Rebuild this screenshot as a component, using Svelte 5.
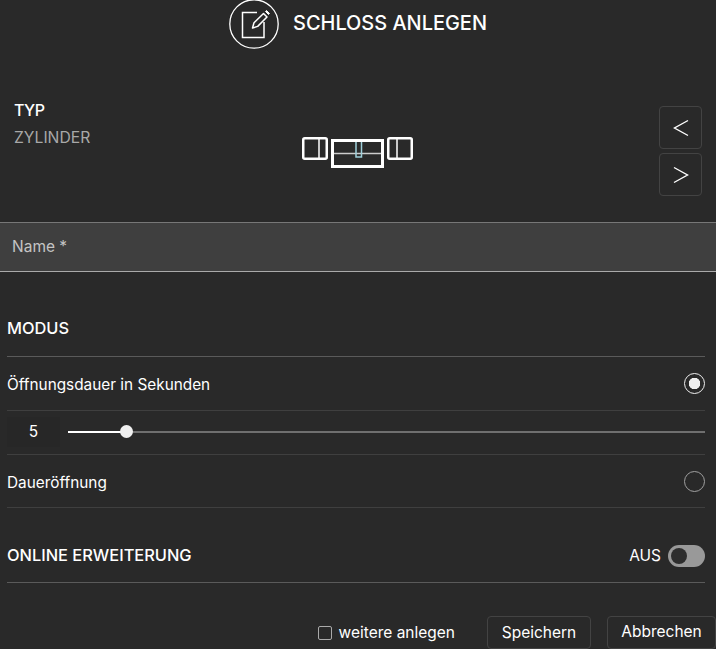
<script>
	let seconds = $state(5);
	let mode = $state('timed');
	let online = $state(false);
	let more = $state(false);
</script>

<div class="page">
	<header class="head">
		<span class="head-icon">
			<svg width="50" height="50" viewBox="0 0 50 50" fill="none" stroke="#fff">
				<circle cx="25" cy="25" r="24.2" stroke-width="1.3" />
				<path d="M35 23V38.5H13.5V13.5H28" stroke-width="1.5" />
				<path d="M23.5 29l1.5-5.2L34.5 14.5l3.5 3.5-9.3 9.4z" stroke-width="1.5" stroke-linejoin="round" />
				<path d="M36.5 12.5l1-1 3 3-1 1z" fill="#fff" stroke-width="1" />
			</svg>
		</span>
		<h1>SCHLOSS ANLEGEN</h1>
	</header>

	<section class="type">
		<div class="type-text">
			<div class="type-label">TYP</div>
			<div class="type-value">ZYLINDER</div>
		</div>
		<div class="type-pic">
			<svg width="114" height="34" viewBox="0 0 114 34" fill="none" stroke="#fff">
				<rect x="2.25" y="2.25" width="23.5" height="20.5" rx="1.5" stroke-width="2.5" />
				<path d="M18 3V22" stroke-width="1.5" />
				<rect x="31.5" y="4.5" width="50" height="26" stroke-width="3" />
				<path d="M33 17.5H80" stroke="#ccc" stroke-width="1.5" />
				<path d="M55 6V21H60.5V6" stroke="#9fd0da" stroke-width="1.5" />
				<rect x="87.25" y="2.25" width="23.5" height="20.5" rx="1.5" stroke-width="2.5" />
				<path d="M96 3V22" stroke-width="1.5" />
			</svg>
		</div>
		<div class="arrows">
			<button class="arrow" aria-label="Zurück">
				<svg width="16" height="18" viewBox="0 0 16 18" fill="none" stroke="#fff" stroke-width="1.4"><path d="M15 1.5L1.5 9L15 16.5" /></svg>
			</button>
			<button class="arrow" aria-label="Weiter">
				<svg width="16" height="18" viewBox="0 0 16 18" fill="none" stroke="#fff" stroke-width="1.4"><path d="M1 1.5L14.5 9L1 16.5" /></svg>
			</button>
		</div>
	</section>

	<div class="name-field">Name *</div>

	<section class="modus">
		<h2 class="modus-title">MODUS</h2>
		<button class="row" onclick={() => (mode = 'timed')}>
			<span class="row-text">Öffnungsdauer in Sekunden</span>
			<span class="radio" class:on={mode === 'timed'}></span>
		</button>
		<div class="slider-row">
			<span class="value">{seconds}</span>
			<div class="track">
				<div class="fill" style="width: {seconds * 11.6}px"></div>
				<div class="thumb" style="left: {seconds * 11.6 - 6}px"></div>
			</div>
		</div>
		<button class="row last" onclick={() => (mode = 'open')}>
			<span class="row-text">Daueröffnung</span>
			<span class="radio" class:on={mode === 'open'}></span>
		</button>
	</section>

	<section class="online">
		<h2>ONLINE ERWEITERUNG</h2>
		<div class="toggle-wrap">
			<span>{online ? 'AN' : 'AUS'}</span>
			<button class="toggle" aria-label="Online Erweiterung" onclick={() => (online = !online)}>
				<span class="knob"></span>
			</button>
		</div>
	</section>

	<footer class="foot">
		<label class="check">
			<input type="checkbox" bind:checked={more} />
			<span>weitere anlegen</span>
		</label>
		<button class="btn save">Speichern</button>
		<button class="btn cancel"><span>Abbrechen</span></button>
	</footer>
</div>

<style>
	:global(body) {
		background: #292929;
	}
	.page {
		width: 716px;
		height: 649px;
		overflow: hidden;
		background: #292929;
		color: #fff;
		font-family: Inter, "Liberation Sans", sans-serif;
		font-size: 15.5px;
		font-weight: 400;
	}
	button {
		font: inherit;
		color: inherit;
		background: none;
		border: none;
		padding: 0;
	}
	.head {
		display: flex;
		justify-content: center;
		align-items: center;
		gap: 14px;
		height: 48px;
	}
	.head-icon {
		display: block;
		width: 50px;
		height: 50px;
	}
	h1 {
		margin: 0;
		font-size: 19.95px;
		font-weight: 500;
		position: relative;
		top: -1px;
	}
	.type {
		display: grid;
		grid-template-columns: 1fr auto 1fr;
		height: 174px;
		padding: 58px 14px 0;
		box-sizing: border-box;
	}
	.type-label {
		font-size: 16px;
		font-weight: 500;
		letter-spacing: -0.6px;
		line-height: 20px;
		margin-top: -6px;
	}
	.type-value {
		color: #a8a8a8;
		font-size: 15.7px;
		line-height: 20px;
		margin-top: 8px;
	}
	.type-pic {
		padding-top: 30px;
	}
	.arrows {
		display: flex;
		flex-direction: column;
		align-items: flex-end;
		gap: 4px;
	}
	.arrow {
		display: flex;
		align-items: center;
		justify-content: center;
		width: 43px;
		height: 43px;
		border: 1px solid #434343;
		border-radius: 4px;
	}
	.name-field {
		height: 48px;
		line-height: 47px;
		padding-left: 12px;
		background: #3f3f3f;
		border-top: 1px solid #777;
		border-bottom: 1px solid #aaa;
		color: #c4c4c4;
	}
	.modus {
		margin: 0 11px 0 7px;
	}
	.modus-title {
		margin: 0;
		height: 85px;
		line-height: 113px;
		box-sizing: border-box;
		border-bottom: 1px solid #5a5a5a;
		font-size: 16.4px;
	}
	h2 {
		font-weight: 500;
	}
	.row {
		display: flex;
		justify-content: space-between;
		align-items: center;
		width: 100%;
		height: 54px;
		text-align: left;
		border-bottom: 1px solid #3f3f3f;
	}
	.row.last {
		height: 53px;
	}
	.row-text {
		font-size: 15.35px;
		padding-top: 2px;
	}
	.row.last .row-text {
		padding-top: 3px;
	}
	.radio {
		box-sizing: border-box;
		width: 21px;
		height: 21px;
		border-radius: 50%;
		border: 1px solid #a0a0a0;
	}
	.radio.on {
		border: 1.5px solid #f0f0f0;
		background: radial-gradient(circle, #f0f0f0 0 5.5px, transparent 6px);
	}
	.slider-row {
		display: flex;
		align-items: center;
		height: 44px;
		padding-bottom: 2px;
		box-sizing: border-box;
		border-bottom: 1px solid #3f3f3f;
	}
	.value {
		width: 53px;
		height: 30px;
		line-height: 30px;
		margin-right: 8px;
		text-align: center;
		background: #272727;
	}
	.track {
		position: relative;
		flex: 1;
		height: 2px;
		background: #6f6f6f;
	}
	.fill {
		position: absolute;
		left: 0;
		top: 0;
		height: 2px;
		background: #fff;
	}
	.thumb {
		position: absolute;
		top: -6px;
		width: 13px;
		height: 13px;
		border-radius: 50%;
		background: #f0f0f0;
	}
	.online {
		display: flex;
		justify-content: space-between;
		align-items: center;
		margin: 0 11px 0 7px;
		height: 75px;
		padding-top: 20px;
		box-sizing: border-box;
		border-bottom: 1px solid #5a5a5a;
	}
	.online h2 {
		margin: 0;
		font-size: 16.4px;
	}
	.toggle-wrap {
		display: flex;
		align-items: center;
		gap: 7px;
		padding-top: 1px;
	}
	.toggle {
		display: flex;
		align-items: center;
		width: 37px;
		height: 22px;
		border-radius: 11px;
		background: #999;
		padding-left: 3px;
		box-sizing: border-box;
	}
	.knob {
		width: 16px;
		height: 16px;
		border-radius: 50%;
		background: #2e2e2e;
	}
	.foot {
		display: flex;
		justify-content: flex-end;
		align-items: center;
		padding-top: 33px;
	}
	.check {
		display: flex;
		align-items: center;
		gap: 7px;
		margin-right: 32px;
	}
	.check input {
		appearance: none;
		width: 14px;
		height: 14px;
		margin: 0;
		border: 1px solid #aaa;
		border-radius: 2px;
	}
	.btn {
		height: 33px;
		border: 1px solid #434343;
		border-radius: 4px;
		box-sizing: border-box;
	}
	.save {
		width: 104px;
		margin-right: 16px;
	}
	.cancel {
		width: 109px;
		padding-bottom: 3px;
	}
</style>
